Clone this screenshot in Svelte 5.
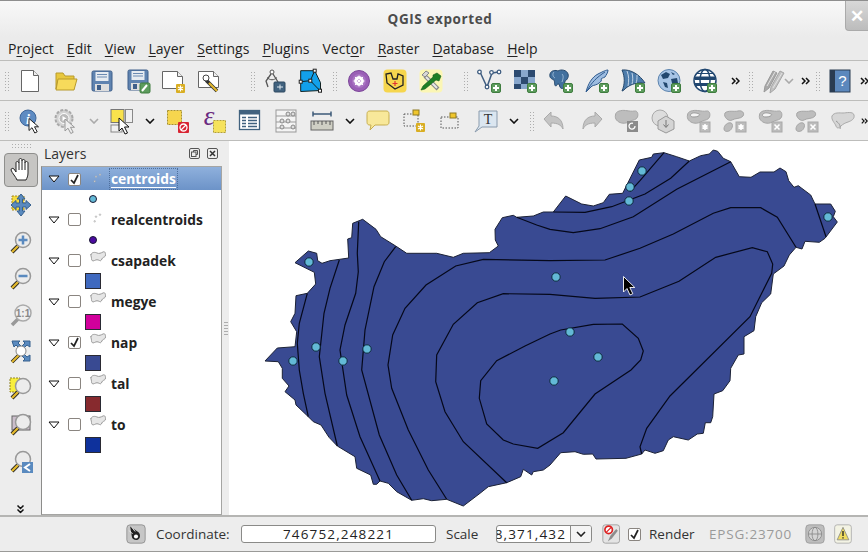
<script>
  const badge = (mark) => `<rect x="14.5" y="14.5" width="9" height="9" rx="1.5" fill="#5d9c5d" stroke="#3f7d3f"/><path d="${mark}" stroke="#fff" stroke-width="2" fill="none"/>`;
  const plus = badge('M19 16v6M16 19h6');
  const arrow = `<path d="M11 9.5v12l3-2.8 2.8 5.3 2.4-1.2-2.7-5h4z" fill="#fff" stroke="#222"/>`;
  const floppy = (s) => `<rect x="2" y="${s}" width="20" height="20" rx="1.5" fill="#5f83b0" stroke="#3f5f8a"/><rect x="5.5" y="${s + 1}" width="13" height="9" fill="#e6ebf1"/><path d="M7 ${s + 3.5}h10M7 ${s + 6}h10" stroke="#6b8ab2"/><rect x="5" y="${s + 13}" width="14" height="7" fill="#dedede"/><rect x="7" y="${s + 14}" width="4" height="5" fill="#3f5f8a"/>`;
  const glass = `<path d="M3 22l6-6" stroke="#222" stroke-width="4"/><path d="M3 22l6-6" stroke="#e3b92e" stroke-width="2.4"/><circle cx="14" cy="10" r="7.5" fill="#ececec" stroke="#999" stroke-width="1.5"/>`;
  const digiBlob = `<path d="M0.500 6c0-4 6-5 10-4.500s6 1 9 .5 4 3 3 6-5 3-7 4-5 3-9 2-7-4-6-8z" fill="#bdbdbd" stroke="#a6a6a6"/>`;
  const treeBlob = `<path d="M1 3.500c1-2.500 4-2.500 6-1.500s4 0 6-1 2.500 1 2.500 3-2 2-3 3-1 3.500-3 2.500-3-1-5 0-3 0-3-2-1-3-.5-4.500z" fill="#e6e6e6" stroke="#9a9a9a"/>`;
  const greyBadge = (m) => `<rect x="13" y="13" width="10" height="10" fill="#bcbcbc" stroke="#aaa"/><path d="${m}" stroke="#fff" stroke-width="1.6" fill="none"/>`;
  const gearMark = 'M18 15v6M15.4 16.5l5.2 3M20.6 16.5l-5.2 3';
  const xMark = 'M15.5 15.5l5 5M20.5 15.5l-5 5';
  const ringHole = `<path d="M4 5c2-2 6-1 8 0s-1 3-5 3-4-2-3-3z" fill="#f4f4f4" stroke="#999"/>`;
  const twoPart = `<path d="M2 4c3-3 9-1 13-2s7 2 5 5-8 2-11 4-9-3-7-7z" fill="#bdbdbd" stroke="#a6a6a6"/><path d="M1 20c0-4 4-7 7-6s1 7-2 8-5 0-5-2z" fill="#bdbdbd" stroke="#a6a6a6"/>`;

  const icons = {
    doc: `<path d="M3.5 1.5h12l5 5v16h-17z" fill="#fff" stroke="#666"/><path d="M15.5 1.5v5h5" fill="#eee" stroke="#666"/>`,
    open: `<path d="M2 20V4h7l2 3h9v4H4z" fill="#e8c83e" stroke="#b89a2d"/><path d="M4 10h19l-3 11H2z" fill="#f7da5b" stroke="#b89a2d"/>`,
    save: floppy(2),
    saveas: floppy(1) + `<rect x="14" y="14" width="10" height="10" rx="1.5" fill="#5d9c5d" stroke="#3f7d3f"/><path d="M16 22l5-6" stroke="#fff" stroke-width="2"/>`,
    composer: `<path d="M0.5 2.5h15l5 5v12H0.5z" fill="#fff" stroke="#666"/><path d="M15.5 2.5v5h5" fill="#eee" stroke="#666"/><rect x="14" y="15" width="9" height="9" rx="1" fill="#d9ae22"/><path d="M18.5 16.5v6M16 18l5 3M21 18l-5 3" stroke="#fff" stroke-width="1.2"/>`,
    manager: `<path d="M0.5 2.5h15l5 5v11H0.5z" fill="#fff" stroke="#666"/><path d="M15.5 2.5v5h5" fill="#eee" stroke="#666"/><path d="M7 9l2 3 10 10" stroke="#333" stroke-width="3.6" fill="none"/><path d="M11 14l8 8" stroke="#e3b92e" stroke-width="2.2"/><circle cx="8" cy="9" r="3" fill="#fff" stroke="#444"/>`,
    measure: `<circle cx="9" cy="3" r="2" fill="#fff" stroke="#555"/><path d="M8 5L3 12l2 6M10 5l5 8" stroke="#555" stroke-width="1.3" fill="none"/><path d="M4 8.5c3 3 7 3 10 0" stroke="#555" fill="none"/><rect x="11" y="13" width="11" height="10" rx="1" fill="#41627f" stroke="#2e4960"/><path d="M14 18h6M17 15.500v5" stroke="#dfe8ef"/>`,
    node: `<path d="M1.700 1.700h14l5.800 12 0 7.800-19.800 1z" fill="#12a0ea" stroke="#122"/><path d="M11.300 11.700L15.700 1.700M11.300 11.700l-9.600 1M11.300 11.700L21 21.700" stroke="#122"/><g fill="#fff" stroke="#222"><rect x="14.200" y="0.200" width="3" height="3"/><rect x="0.200" y="11.200" width="3" height="3"/><rect x="9.800" y="10.200" width="3" height="3"/><rect x="19.500" y="20.200" width="3" height="3"/></g>`,
    plug: `<circle cx="12" cy="12" r="10.500" fill="#9a5fb6" stroke="#7c4699"/><circle cx="12" cy="12" r="7" fill="#a974c2"/><circle cx="12" cy="12" r="3.500" fill="none" stroke="#fff" stroke-width="2.500"/><path d="M12 6.500v11M6.500 12h11M8 8l8 8M16 8l-8 8" stroke="#fff"/>`,
    capture: `<rect x="0.500" y="0.500" width="23" height="23" rx="4" fill="#f6d64e"/><path d="M3 5l1 9 8 6 8-4V7l-5-2-1 5-4 0-2-6z" fill="none" stroke="#222" stroke-width="1.300"/><path d="M12 12v5M9.500 14.500h5" stroke="#d33" stroke-width="1.200"/>`,
    tools: `<rect x="0.500" y="0.500" width="23" height="23" rx="4" fill="#fbf6b4"/><path d="M19 20L6 7" stroke="#888" stroke-width="4"/><path d="M18 19L7 8" stroke="#e8e8e8" stroke-width="2"/><path d="M2 21l4-1 11-9 3 1 2-5-4-3-4 2 0 2-10 9z" fill="#1e7f23" stroke="#145c18" stroke-width=".6"/><path d="M3 6l4-4 3 2-4 4z" fill="#d8d8d8" stroke="#888"/>`,
    vector: `<path d="M3 3l7 15 5-14 7-1" fill="none" stroke="#3f5d80" stroke-width="1.500"/><g fill="#fff" stroke="#3f5d80" stroke-width="1.300"><circle cx="2.500" cy="3" r="1.800"/><circle cx="10" cy="18" r="1.800"/><circle cx="14.500" cy="3.500" r="1.800"/><circle cx="22" cy="3" r="1.800"/></g>` + plus,
    raster: `<g fill="#2c4a70"><rect x="1" y="1" width="7" height="7"/><rect x="15" y="1" width="7" height="7"/><rect x="8" y="8" width="7" height="7"/><rect x="1" y="15" width="7" height="5"/></g><g fill="#88a7cd"><rect x="8" y="1" width="7" height="7"/><rect x="1" y="8" width="7" height="7"/><rect x="15" y="8" width="7" height="6"/><rect x="8" y="15" width="6" height="5"/></g>` + plus,
    pg: `<path d="M1 5c1-4 6-4 8-3 3-2 9-1 10 3 1 3-1 6-3 7l-1 6c-1 2-3 2-4 0l-1-3c-3 0-2 2-3 2-2 0-1-4-2-6-2-1-5-2-4-6z" fill="#42709e" stroke="#26486c"/><path d="M5 3c-2 2-1 5 1 6M13 5c2 2 1 5 0 8" stroke="#9dbbd8" fill="none"/>` + plus,
    feather: `<path d="M1 23c2-8 6-15 12-18s8-4 10-4c0 3-2 5-3 7-2 1-3 1-4 2 1 1 0 3-2 4-2 2-5 2-7 3-2 2-4 4-6 6z" fill="#9dbce0" stroke="#2f5b8f"/><path d="M2 22c4-8 10-14 18-19" stroke="#2f5b8f" fill="none"/>` + plus,
    sail: `<path d="M1 1c9-1 18 5 23 13-7-1-14 1-19 5-1 1-3 3-4 3 3-7 3-14 0-21z" fill="#4d7cab" stroke="#26486c"/><path d="M6 2c2 5 2 10 1 15M11 4c1 4 1 8 0 11M16 6c0 3 0 6-1 8" stroke="#c3d5e8" fill="none"/>` + plus,
    globe: `<circle cx="12" cy="11.500" r="11" fill="#a8c5e6" stroke="#5c83ad"/><path d="M4 6l5-3 4 2-2 4-5 1zM6 13l4 1 1 5-3-1zM14 10l6-1 1 5-4 4-2-4zM14 3l4 2-2 1z" fill="#23486f"/>` + plus,
    wms: `<circle cx="12" cy="11.500" r="11" fill="#fff" stroke="#214770" stroke-width="1.500"/><path d="M2 7.500h20v3.500H2zM2 14h20v3H2zM4 4h16v1H4z" fill="#214770"/><ellipse cx="12" cy="11.500" rx="5" ry="11" fill="none" stroke="#214770" stroke-width="1.500"/>` + plus,
    pencils: `<path d="M2 23l1-6 8-15 4 2-8 15z" fill="#aaa" stroke="#999"/><path d="M8 24l1-6 9-16 4 2-9 16z" fill="#c2c2c2" stroke="#a5a5a5"/><path d="M5 17l8-14M11 19l9-15" stroke="#e2e2e2"/>`,
    help: `<rect x="1" y="1" width="20" height="22" fill="#5c88bd" stroke="#2a3c52"/><rect x="1" y="1" width="5" height="22" fill="#2a3c52"/><text x="13.500" y="17" font-size="15" text-anchor="middle" fill="#fff" font-family="Liberation Sans">?</text>`,
    identify: `<circle cx="10" cy="9" r="8" fill="#5e8bc2" stroke="#3e6598"/><text x="10" y="14.500" font-size="14" font-weight="700" font-style="italic" text-anchor="middle" fill="#fff" font-family="Liberation Serif">i</text>` + arrow,
    action: `<circle cx="10" cy="9.500" r="8.500" fill="#d3d3d3" stroke="#a9a9a9" stroke-width="2" stroke-dasharray="3 1.500"/><circle cx="10" cy="9.500" r="5" fill="#bbb" stroke="#fff"/><path d="M8.500 7v5l4-2.500z" fill="#fff"/><path d="M11 10v12l3-2.800 2.800 5.300 2.400-1.200-2.700-5h4z" fill="#eee" stroke="#999"/>`,
    select: `<rect x="1" y="0.500" width="13" height="13" fill="#f9e24c" stroke="#777"/><rect x="15.500" y="0.500" width="7" height="13" fill="#f0f0f0" stroke="#888"/><rect x="1" y="16" width="11" height="7" fill="#f0f0f0" stroke="#888"/>` + `<path d="M9 9v13l3-3 3 6 2.500-1-3-6h4.500z" fill="#fff" stroke="#111"/>`,
    deselect: `<rect x="1.500" y="1.500" width="14" height="14" fill="#f6d64e" stroke="#a6912f" stroke-dasharray="2 1"/><rect x="12" y="13" width="11" height="11" rx="1" fill="#d82432"/><circle cx="17.500" cy="18.500" r="3.500" fill="none" stroke="#fff" stroke-width="1.300"/><path d="M15 21l5-5" stroke="#fff" stroke-width="1.300"/>`,
    expr: `<text x="7" y="16" font-size="27" text-anchor="middle" fill="#6a2a80" font-family="Liberation Serif" font-style="italic">ε</text><rect x="11.500" y="11.500" width="12" height="12" fill="#f6e25c" stroke="#b2a038" stroke-dasharray="2 1"/>`,
    table: `<rect x="1.500" y="1.500" width="20" height="19" fill="#fff" stroke="#41627f" stroke-width="1.300"/><rect x="1.500" y="1.500" width="20" height="4" fill="#41627f"/><path d="M4 8.500h4M4 11.500h4M4 14.500h4M4 17.500h4M10 8.500h9M10 11.500h9M10 14.500h9M10 17.500h9" stroke="#41627f" stroke-width="1.300"/>`,
    abacus: `<rect x="2" y="1" width="20" height="22" fill="#f4f4f4" stroke="#999"/><path d="M2 7h20M2 13h20M2 19h20" stroke="#999"/><g fill="#ddd" stroke="#888"><circle cx="14" cy="5" r="2"/><circle cx="19" cy="5" r="2"/><circle cx="8" cy="12" r="2"/><circle cx="14" cy="12" r="2"/><circle cx="8" cy="18" r="2"/><circle cx="19" cy="18" r="2"/></g>`,
    ruler: `<path d="M3 5h18M3 2.500v5M21 2.500v5" stroke="#3d5a78" stroke-width="1.500"/><rect x="1" y="12" width="22" height="9" fill="#cfcfc4" stroke="#666"/><path d="M4 12v4M8 12v3M12 12v4M16 12v3M20 12v4" stroke="#555"/>`,
    balloon: `<path d="M4 2h16c3 0 3 2 3 4v7c0 3-2 3-4 3H9l-5 5 1-5H4c-3 0-3-2-3-4V6c0-2 0-4 3-4z" fill="#f8e89a" stroke="#c7ae4e"/>`,
    movelabel: `<rect x="2" y="5" width="14" height="12" fill="#fff" fill-opacity="0" stroke="#555" stroke-dasharray="1.500 1.500"/><rect x="11" y="1" width="6" height="5" fill="#f0c62c" stroke="#8f7b22"/><rect x="14" y="14" width="9" height="9" rx="1" fill="#d9ae22"/><path d="M18.500 15.500v6M16 17l5 3M21 17l-5 3" stroke="#fff" stroke-width="1.200"/>`,
    rectlabel: `<rect x="3" y="8" width="17" height="11" fill="none" stroke="#555" stroke-dasharray="1.500 1.500"/><rect x="12" y="4" width="6" height="5" fill="#f0c62c" stroke="#8f7b22"/>`,
    textann: `<path d="M5 2h18v16H8l-7 5 4-6z" fill="#dbe6f0" stroke="#8a9bad"/><text x="14" y="15" font-size="14" text-anchor="middle" fill="#333" font-family="Liberation Serif">T</text>`,
    undo: `<path d="M1 10l7-7v4c7 0 12 4 12 13-2-4-5-6-12-6v4z" fill="#c4c4c4" stroke="#aaa"/>`,
    redo: `<path d="M23 10l-7-7v4C9 7 4 11 4 20c2-4 5-6 12-6v4z" fill="#c4c4c4" stroke="#aaa"/>`,
    rotate: digiBlob + `<rect x="12" y="12" width="11" height="11" fill="#8b8b8b"/><path d="M20 17a3 3 0 1 1-2-2.700" stroke="#fff" fill="none" stroke-width="1.300"/>`,
    simplify: `<circle cx="9" cy="9" r="8" fill="#ddd" stroke="#aaa"/><path d="M15 7l8 5v8l-8 4-8-4v-8z" fill="#d4d4d4" stroke="#999"/><path d="M15 11v7M12.500 15.500l2.500 3 2.500-3" stroke="#777" fill="none"/>`,
    ring: digiBlob + ringHole + greyBadge(gearMark),
    part: twoPart + greyBadge(gearMark),
    delring: digiBlob + ringHole + greyBadge(xMark),
    delpart: twoPart + greyBadge(xMark),
    reshape: `<path d="M1 7c2-4 8-3 11-3s10-2 11 2-3 6-6 7-5 2-7 4-4 3-5 0-5-6-4-10z" fill="#d6d6d6" stroke="#aaa"/><path d="M5 12c3 2 5 5 4 8" stroke="#999" fill="none"/>`,
    pan: `<path d="M6 22c-1-3-5-7-6-10 0-2 2-2 3-1l2 3V5c0-2 2-2 3 0V2c0-2 3-2 3 0v1c0-2 3-2 3 0v2c0-2 3-2 3 0v10c0 3-1 5-2 7z" fill="#fff" stroke="#222" transform="translate(2,0)"/><path d="M10 5v7M13 3v9M16 5v7" stroke="#222"/>`,
    pansel: `<path d="M3 3h12v14H3z" fill="#f6dc3f" stroke="#a58b1e" stroke-dasharray="2 1"/><path d="M12 1l4 5h-2.500v4H17V7.500l5 4.500-5 4.500V14h-3.500v4H16l-4 5-4-5h2.500v-4H7v2.500L2 12l5-4.500V10h3.500V6H8z" fill="#5a8abf" stroke="#36608e"/>`,
    zin: glass + `<path d="M14 5.500v9M9.500 10h9" stroke="#5a8abf" stroke-width="2.500"/>`,
    zout: glass + `<path d="M9.500 10h9" stroke="#5a8abf" stroke-width="2.500"/>`,
    z11: `<path d="M3 22l6-6" stroke="#999" stroke-width="3.500"/><circle cx="14" cy="10" r="8" fill="#efefef" stroke="#aaa" stroke-width="1.500"/><text x="14" y="13.500" font-size="10" font-weight="700" text-anchor="middle" fill="#888" font-family="Liberation Sans">1:1</text>`,
    zfull: `<path d="M3 2h8L9 4l3 3-2 2-3-3-2 2zM21 2h-7l2 2-3 3 2 2 3-3 3 2zM21 22h-7l2-2-3-3 2-2 3 3 3-2z" fill="#5a8abf" stroke="#36608e"/>` + `<path d="M3 23l7-7" stroke="#222" stroke-width="3.600"/><path d="M3 23l7-7" stroke="#e3b92e" stroke-width="2.200"/><circle cx="12" cy="12" r="5" fill="#fff" stroke="#888"/>`,
    zsel: `<rect x="1" y="2" width="10" height="14" fill="#f8ee3c" stroke="#8f8123" stroke-dasharray="2 1"/>` + glass,
    zlayer: `<rect x="3" y="4" width="18" height="14" fill="#cbbecb" stroke="#666"/>` + glass,
    zlast: glass + `<rect x="13" y="13" width="11" height="11" fill="#5a8abf"/><path d="M21 15l-5 3.500 5 3.500" fill="none" stroke="#fff" stroke-width="2"/>`,
    mouse: `<rect x="1" y="1" width="22" height="22" rx="4" fill="#c6c6c6" stroke="#8a8a8a"/><path d="M5 3l10 7c3 3 2 8-1 9s-7-1-7-4z" fill="#222"/><path d="M7 4l4 5M4 8l4 4" stroke="#fff"/><circle cx="12" cy="15" r="2.500" fill="#fff"/>`,
    norender: `<rect x="1" y="1" width="20" height="22" rx="3" fill="#e4e4e4" stroke="#999"/><circle cx="8" cy="7" r="4.500" fill="#fff" stroke="#d22" stroke-width="2"/><path d="M5 10l6-6" stroke="#d22" stroke-width="1.500"/><path d="M7 21l3-7 7-8 2 2-7 9z" fill="#8d8d8d"/>`,
    crs: `<rect x="1" y="1" width="22" height="22" rx="4" fill="#bdbdbd" stroke="#999"/><circle cx="12" cy="12" r="8" fill="#d4d4d4" stroke="#888"/><ellipse cx="12" cy="12" rx="3.500" ry="8" fill="none" stroke="#888"/><path d="M4 12h16" stroke="#888"/>`,
    warn: `<rect x="2" y="1" width="20" height="22" rx="3" fill="#f3f3e4" stroke="#aaa"/><path d="M12 4l7 15H5z" fill="#f0dc5e" stroke="#888"/><path d="M12 8.500v6M12 16v1.500" stroke="#222" stroke-width="1.600"/>`,
    dots: `<g fill="#e2e2e2" stroke="#999" stroke-width=".7"><circle cx="9" cy="10" r="1.200"/><circle cx="15" cy="7" r="1.200"/><circle cx="7" cy="17" r="1.200"/></g>`
  };

  const B = (id) => ({ t: 'b', id });
  const row1 = [
    { t: 'h', c: 'h1' }, ...['doc', 'open', 'save', 'saveas', 'composer', 'manager'].map(B),
    { t: 'h', c: 'h2' }, ...['measure', 'node'].map(B),
    { t: 'h', c: 'h3' }, ...['plug', 'capture', 'tools'].map(B),
    { t: 'h', c: 'h4' }, ...['vector', 'raster', 'pg', 'feather', 'sail', 'globe', 'wms'].map(B),
    { t: 'm', c: 'm1' }, { t: 'h', c: 'h5' }, B('pencils'), { t: 'c', c: 'grey narrow' }, { t: 'm', c: 'm2' },
    { t: 'h', c: 'h6' }, B('help'), { t: 'm', c: 'm3' }
  ];
  const row2 = [
    { t: 'h', c: 'h1' }, B('identify'), B('action'), { t: 'c', c: 'grey' }, B('select'), { t: 'c' },
    ...['deselect', 'expr', 'table', 'abacus', 'ruler'].map(B), { t: 'c' },
    ...['balloon', 'movelabel', 'rectlabel', 'textann'].map(B), { t: 'c' },
    { t: 'h', c: 'h7' }, ...['undo', 'redo', 'rotate', 'simplify', 'ring', 'part', 'delring', 'delpart', 'reshape'].map(B), { t: 'm', c: 'm4' }
  ];
  const side = ['pansel', 'zin', 'zout', 'z11', 'zfull', 'zsel', 'zlayer', 'zlast'];

  const menus = [
    ['P', 'r', 'oject'], ['', 'E', 'dit'], ['', 'V', 'iew'], ['', 'L', 'ayer'], ['', 'S', 'ettings'],
    ['', 'P', 'lugins'], ['Vect', 'o', 'r'], ['', 'R', 'aster'], ['', 'D', 'atabase'], ['', 'H', 'elp']
  ];
  const layers = [
    { name: 'centroids', checked: true, icon: 'dots', dot: '#63b9d6', selected: true },
    { name: 'realcentroids', checked: false, icon: 'dots', dot: '#4b0aa0' },
    { name: 'csapadek', checked: false, swatch: '#3f69bf' },
    { name: 'megye', checked: false, swatch: '#d1009b' },
    { name: 'nap', checked: true, swatch: '#394a92' },
    { name: 'tal', checked: false, swatch: '#872a2e' },
    { name: 'to', checked: false, swatch: '#0e319c' }
  ];

  const outline = `265,361 277.3,348 295,346.7 296.7,331.7 290.7,321.7 295,313.3 296,295.7 307.3,293.3 315.7,284 314.3,272.3 295,262.7 308.3,251 316.7,253.3 317.7,260.7 322,263.3 330,260.7 348.7,258 347.7,239 351.7,237.7 352.7,223.3 362.7,219.3 376,229.3 380.7,236.7 395.7,246 406.7,253.3 436.7,253.3 453.3,257.3 463.3,253.3 489.3,252.7 498.3,246 495.3,240 495,229.3 502.3,217.7 513.3,215.3 516.7,217.3 533.3,216 543.3,212 553.3,212 565.7,196 581.7,204 593.3,206 603.3,202.7 609.3,194.3 622.7,193.3 639.3,160 651.7,157.3 653.3,154 664,152.7 676.7,156.7 689.3,161 700.7,155.7 709.3,154 713.3,150 717.7,151.3 723.3,158.3 730.7,161.7 739.3,176.7 751,177.3 760,172 774,172 780,168 786,171.7 788.7,180.7 794,187.3 798.3,185.7 810.7,195 815,204 830.7,204 835.3,211.3 833.3,216.7 837.3,222 825,238.3 819.3,242.3 805,241.3 802,249 796,247.3 789.3,255 784,266 773.3,274 770.7,294 761.7,302.7 755.7,316.7 754,330.7 744,336.7 744,354 738.3,355 730.7,368.3 730,380.7 722.7,390.7 714,394 712.7,416.7 710.7,422.7 705.3,422.7 703.3,433.3 697.3,434 688.3,440 673.3,436.7 668.3,440 663.3,450.7 655,453.3 645,450 641.7,454 626,458.3 596,459 592.7,454 583.3,454.3 575,451.7 560.7,452.7 550,465 543.3,470 533.3,471.7 531.7,475 523.3,469.3 520.7,476.7 506.7,482.7 488.3,486.7 480,493.3 463.3,506 446.7,499.3 431.7,500.7 423.3,498.7 411.7,500.3 396.7,491.7 388.3,483.3 380,481 376.7,484.3 373.3,484.3 370.7,475 356.7,468.3 355,456.7 337.3,446 329,437.3 321,425 313.3,421.7 308.3,416.7 296,405 295,400 285,391.7 289,386 282.3,378.3 282.3,368.3 278.3,361.7`;
  const contours = [
    '307.3,293.3 299.3,323.3 297.3,343.3 299.3,370 303.3,393.3 308.3,416.7',
    '339.3,260 330,288.3 324,313.3 319.3,356.7 325,393.3 337.3,446',
    '358.7,221.7 357.3,253.3 358.3,271.7 355.7,293.3 345,325 340,350 346.7,395 360,436.7 380,481',
    '395.7,246.7 384.3,261.7 374,286.7 365,330 361.7,370 379.3,435 396.7,475 411.7,500.3',
    '796,247.3 777.3,217.3 760.7,207.700 730.7,207.7 713.3,213.3 673.3,234 640,248.3 605,260 550,260.700 483.3,259.3 455.7,266 426,285 405,308.3 392.7,335 388,365 391.7,388.3 408.3,430 428.3,470 446.7,499.3',
    '641.7,454 640,446.7 646.7,428.3 670,396 750,316.7 771.7,273.3 772.7,264 767.3,251.7 752.3,247.7 715.7,257.3 679,281.3 640,297 595,298.3 550,294.3 503.3,293.7 477.3,302.7 453.3,324.3 436.7,355 435.7,381.7 445,411.7 463.3,441.7 506.7,482.7',
    '560.7,330 593.3,324.3 622.3,324 638.3,338.3 643.3,351 640.7,360 631,370 595,394 563.3,432.7 537.7,448.3 513.3,444 503.3,440 486.7,424 479.3,398.3 480.7,380.7 496.7,360.7 525,346 550,334 560.7,330',
    '516.7,217.3 536.7,225 550,229.3 573.3,232.7 600,228.7 633.3,216.7 676.7,189.3 730.7,161.7',
    '553.3,212 585,212.3 611.7,206.7 645,194 670.7,178.3 689.3,161',
    '630,191.7 640,180.7 664,152.7',
    '815,204 826,236.7'
  ];
  const points = [[642, 171], [630, 187], [629, 201], [828, 217], [556, 277], [570, 332], [598, 357], [554, 381], [309, 262], [316, 347], [293, 361], [343, 361], [367, 349]];
</script>

{#snippet icon(id)}
  <svg class="ico" viewBox="0 0 24 24" width="24" height="24">{@html icons[id]}</svg>
{/snippet}

{#snippet dbl()}
  <svg viewBox="0 0 9 8" width="9" height="8"><path d="M1 1l3 3-3 3M5 1l3 3-3 3" fill="none" stroke="#111" stroke-width="1.500"/></svg>
{/snippet}

{#snippet toolbar(items)}
  <div class="toolbar">
    {#each items as it}
      {#if it.t === 'h'}
        <span class="handle {it.c}"></span>
      {:else if it.t === 'b'}
        <span class="btn">{@render icon(it.id)}</span>
      {:else if it.t === 'c'}
        <span class="chev {it.c ?? ''}"><svg viewBox="0 0 10 6" width="10" height="6"><path d="M1 1l4 4 4-4" fill="none" stroke="currentColor" stroke-width="1.600"/></svg></span>
      {:else}
        <span class="more {it.c}">{@render dbl()}</span>
      {/if}
    {/each}
  </div>
{/snippet}

<div class="win">
  <header class="title">
    <span class="title-text">QGIS exported</span>
    <span class="close">✕</span>
  </header>
  <nav class="menu">
    {#each menus as m}
      <span>{m[0]}<u>{m[1]}</u>{m[2]}</span>
    {/each}
  </nav>
  {@render toolbar(row1)}
  {@render toolbar(row2)}

  <main class="main">
    <aside class="side">
      <span class="side-handle"></span>
      <span class="pan">{@render icon('pan')}</span>
      {#each side as s}
        <span class="side-btn">{@render icon(s)}</span>
      {/each}
      <span class="side-more">{@render dbl()}</span>
    </aside>

    <section class="panel">
      <div class="panel-head">
        <span>Layers</span>
        <span class="panel-btns">
          <svg viewBox="0 0 11 11" width="11" height="11"><rect x=".5" y=".5" width="10" height="10" rx="1.500" fill="none" stroke="#555"/><rect x="2.500" y="4" width="4.500" height="4.500" fill="none" stroke="#555"/><path d="M4.500 4V2.500H8.500V6.500H7" fill="none" stroke="#555"/></svg>
          <svg viewBox="0 0 11 11" width="11" height="11"><rect x=".5" y=".5" width="10" height="10" rx="1.500" fill="none" stroke="#555"/><path d="M3 3l5 5M8 3l-5 5" stroke="#333" stroke-width="1.500"/></svg>
        </span>
      </div>
      <div class="tree">
        {#each layers as l}
          <div class="layer-row" class:selected={l.selected}>
            <svg class="tri" viewBox="0 0 12 8" width="12" height="8"><path d="M1 1h10L6 7z" fill="#fff" stroke="#111"/></svg>
            <span class="check">
              {#if l.checked}<svg viewBox="0 0 11 11" width="11" height="11"><path d="M2 6l3 3 4-8" fill="none" stroke="#222" stroke-width="1.700"/></svg>{/if}
            </span>
            <span class="lay-icon">
              {#if l.icon}
                <svg viewBox="0 0 24 24" width="16" height="16">{@html icons[l.icon]}</svg>
              {:else}
                <svg viewBox="0 0 16 12" width="16" height="12">{@html treeBlob}</svg>
              {/if}
            </span>
            <span class="lay-name">{l.name}</span>
          </div>
          <div class="symbol-row">
            {#if l.swatch}
              <span class="swatch" style="background:{l.swatch}"></span>
            {:else}
              <span class="dot" style="background:{l.dot}"></span>
            {/if}
          </div>
        {/each}
      </div>
    </section>

    <div class="splitter"><span></span></div>

    <div class="map">
      <svg viewBox="229 141 639 374" width="639" height="374">
        <polygon points={outline} fill="#394a92" stroke="#1c2236" stroke-width="1"/>
        {#each contours as c}
          <polyline points={c} fill="none" stroke="#05081a" stroke-width="1.200"/>
        {/each}
        {#each points as p}
          <circle cx={p[0]} cy={p[1]} r="4.200" fill="#63b9d6" stroke="#0d2a3d" stroke-width="1"/>
        {/each}
        <path d="M623.500 276.500v15.500l3.500-3.500 3 6.500 2.800-1.300-3-6.200h5z" fill="#000" stroke="#fff" stroke-width=".9"/>
      </svg>
    </div>
  </main>

  <footer class="status">
    <span class="st-ico mouse">{@render icon('mouse')}</span>
    <span class="coord-label">Coordinate:</span>
    <span class="coord">746752,248221</span>
    <span class="scale-label">Scale</span>
    <span class="scale"><span class="scale-val"><span>8,371,432</span></span><span class="scale-chev"><svg viewBox="0 0 10 6" width="10" height="6"><path d="M1 1l4 4 4-4" fill="none" stroke="#222" stroke-width="1.600"/></svg></span></span>
    <span class="st-ico norender">{@render icon('norender')}</span>
    <span class="check render-check"><svg viewBox="0 0 11 11" width="11" height="11"><path d="M2 6l3 3 4-8" fill="none" stroke="#222" stroke-width="1.700"/></svg></span>
    <span class="render">Render</span>
    <span class="epsg">EPSG:23700</span>
    <span class="st-ico crs">{@render icon('crs')}</span>
    <span class="st-ico warn">{@render icon('warn')}</span>
  </footer>
</div>

<style>
  :global(body) { margin: 0; background: #ededed; }
  .win {
    width: 868px; height: 552px; overflow: hidden; display: flex; flex-direction: column;
    font-family: "Open Sans", "Noto Sans", sans-serif; font-size: 13.500px; color: #2e3436; background: #ededed;
    box-sizing: border-box; border-top: 1px solid #8e8e8e;
  }
  .title {
    flex: none; height: 36px; display: flex; align-items: center; justify-content: center; position: relative; padding-left: 12px; box-sizing: border-box;
    background: linear-gradient(#f8f8f8, #ebebeb); font-weight: 700; font-size: 13.500px; color: #4c4c4c;
  }
  .title-text { letter-spacing: .6px; }
  .close {
    position: absolute; right: 0; top: 0; width: 23px; height: 30px; display: flex; align-items: center; justify-content: center;
    background: linear-gradient(#d8d8d8, #bcbcbc); border-left: 1px solid #aaa; border-bottom: 1px solid #aaa; border-radius: 0 0 0 4px;
    color: #fff; font-weight: 700; font-size: 17px; box-sizing: border-box;
  }
  .menu {
    flex: none; height: 24px; display: flex; gap: 13px; padding-left: 8px; align-items: center; box-sizing: border-box;
    border-bottom: 1px solid #bdbdbb; color: #222; background: #ebebeb; font-size: 14px; letter-spacing: .02px;
  }
  u { text-underline-offset: 2px; text-decoration-thickness: 1px; }
  .toolbar {
    flex: none; height: 40px; display: flex; align-items: center; box-sizing: border-box; border-bottom: 1px solid #bdbdbb; white-space: nowrap;
  }
  .btn { flex: none; width: 36px; height: 36px; display: flex; align-items: center; justify-content: center; }
  .ico { overflow: visible; display: block; }
  .handle {
    flex: none; width: 8px; height: 20px;
    background-image: radial-gradient(circle, #adadad 0.8px, transparent 0.9px); background-size: 3px 3px; background-position: 1px 0;
  }
  .h1 { margin: 0 1px 0 3px; }
  .h2 { margin-left: 21px; }
  .h3 { margin-left: 2px; margin-right: 2px; }
  .h4 { margin-left: 13px; margin-right: 1px; }
  .h5 { margin-left: 0; margin-right: 1px; }
  .h6 { margin-left: -1px; margin-right: 1px; }
  .h7 { margin-left: 4px; margin-right: 1px; }
  .chev { flex: none; width: 20px; display: flex; justify-content: center; color: #111; }
  .chev.grey { color: #aaa; }
  .chev.narrow { width: 12px; margin-left: -9px; }
  .more { flex: none; display: flex; justify-content: center; align-items: center; }
  .m1 { width: 24px; }
  .m2 { width: 20px; }
  .m3 { width: 9px; margin-left: 1px; }
  .m4 { width: 7px; justify-content: flex-start; }
  .main { flex: 1; min-height: 0; display: flex; }
  .side { flex: none; width: 41px; display: flex; flex-direction: column; align-items: center; }
  .side-handle {
    width: 20px; height: 6px; margin: 2px 0 4px;
    background-image: radial-gradient(circle, #adadad 0.8px, transparent 0.9px); background-size: 3px 3px;
  }
  .pan {
    width: 34px; height: 34px; box-sizing: border-box; display: flex; align-items: center; justify-content: center;
    background: #c6c5c3; border: 1px solid #8f8f8d; border-radius: 4px; flex: none;
  }
  .side-btn { flex: none; width: 36px; height: 36.500px; display: flex; align-items: center; justify-content: center; }
  .side-more { flex: none; margin-top: 26px; transform: rotate(90deg); display: flex; }
  .panel { flex: none; width: 181px; display: flex; flex-direction: column; }
  .panel-head {
    flex: none; height: 25px; display: flex; align-items: center; justify-content: space-between; padding: 0 2px 0 3px; color: #333; box-sizing: border-box; font-size: 14px;
  }
  .panel-btns { display: flex; gap: 7px; margin-right: 2px; }
  .tree { flex: 1; background: #fff; border: 1px solid #a5a5a3; border-left-color: #8c8c8a; }
  .layer-row { height: 23px; display: flex; align-items: center; position: relative; }
  .layer-row.selected {
    background: linear-gradient(#8fb0dc, #6c93c8); color: #fff; padding-top: 1px; box-sizing: border-box;
  }
  .tri { flex: none; margin-left: 6px; }
  .check {
    flex: none; width: 13px; height: 13px; box-sizing: border-box; margin-left: 8px; background: #fff; border: 1px solid #8a8580; border-radius: 2px;
    display: flex; align-items: center; justify-content: center;
  }
  .lay-icon { flex: none; width: 16px; height: 16px; margin-left: 9px; margin-top: -3px; display: flex; }
  .lay-name { margin-left: 5px; font-weight: 700; font-size: 13.800px; color: #222; padding: 1px 0; }
  .selected .lay-name { color: #fff; border-bottom: 1px solid #fff; outline: 1px dotted #4e6f9c; outline-offset: 1px; padding: 0; line-height: 17px; }
  .symbol-row { height: 18px; box-sizing: border-box; padding-left: 43px; display: flex; align-items: center; }
  .swatch { width: 16px; height: 16px; box-sizing: border-box; border: 1px solid #2a2a33; }
  .dot { width: 8px; height: 8px; margin-left: 4px; box-sizing: border-box; border-radius: 50%; border: 1px solid #1a1a33; }
  .splitter { flex: none; width: 7px; display: flex; align-items: center; justify-content: center; }
  .splitter span {
    width: 4px; height: 14px; background-image: radial-gradient(circle, #adadad 0.7px, transparent 0.8px); background-size: 2px 3px;
  }
  .map { flex: 1; background: #fff; overflow: hidden; border-left: 0; }
  .map svg { display: block; }
  .status {
    flex: none; height: 37px; display: flex; align-items: center; box-sizing: border-box; border-top: 2px solid #b5b5b3; border-bottom: 1px solid #9a9a98; font-size: 13.500px; color: #333;
  }
  .st-ico { flex: none; width: 20px; height: 20px; display: flex; align-items: center; justify-content: center; }
  .st-ico :global(svg) { width: 20px; height: 20px; }
  .mouse { margin-left: 126px; }
  .coord-label { margin-left: 10px; width: 85px; flex: none; }
  .coord {
    flex: none; width: 195px; height: 18px; box-sizing: border-box; border: 1px solid #8a8a88; border-radius: 3px; background: #fff;
    text-align: center; line-height: 16px; color: #222; letter-spacing: 1.150px;
  }
  .scale-label { flex: none; margin-left: 10px; width: 50px; }
  .scale {
    flex: none; width: 96px; height: 18px; box-sizing: border-box; display: flex; border: 1px solid #8a8a88; border-radius: 3px; background: #fff; overflow: hidden;
  }
  .scale-val { flex: 1; min-width: 0; display: flex; justify-content: flex-end; overflow: hidden; line-height: 16px; border-right: 1px solid #8a8a88; padding-right: 4px; color: #222; white-space: nowrap; letter-spacing: 1.150px; }
  .scale-val span { flex: none; }
  .scale-chev { flex: none; width: 20px; display: flex; align-items: center; justify-content: center; background: #f4f4f4; }
  .norender { margin-left: 10px; }
  .render-check { margin-left: 6px; }
  .render { flex: none; margin-left: 8px; width: 46px; }
  .epsg { flex: none; margin-left: 14px; width: 87px; color: #9a9a9a; letter-spacing: .8px; white-space: nowrap; }
  .crs { margin-left: 9px; }
  .warn { margin-left: 8px; }
</style>
